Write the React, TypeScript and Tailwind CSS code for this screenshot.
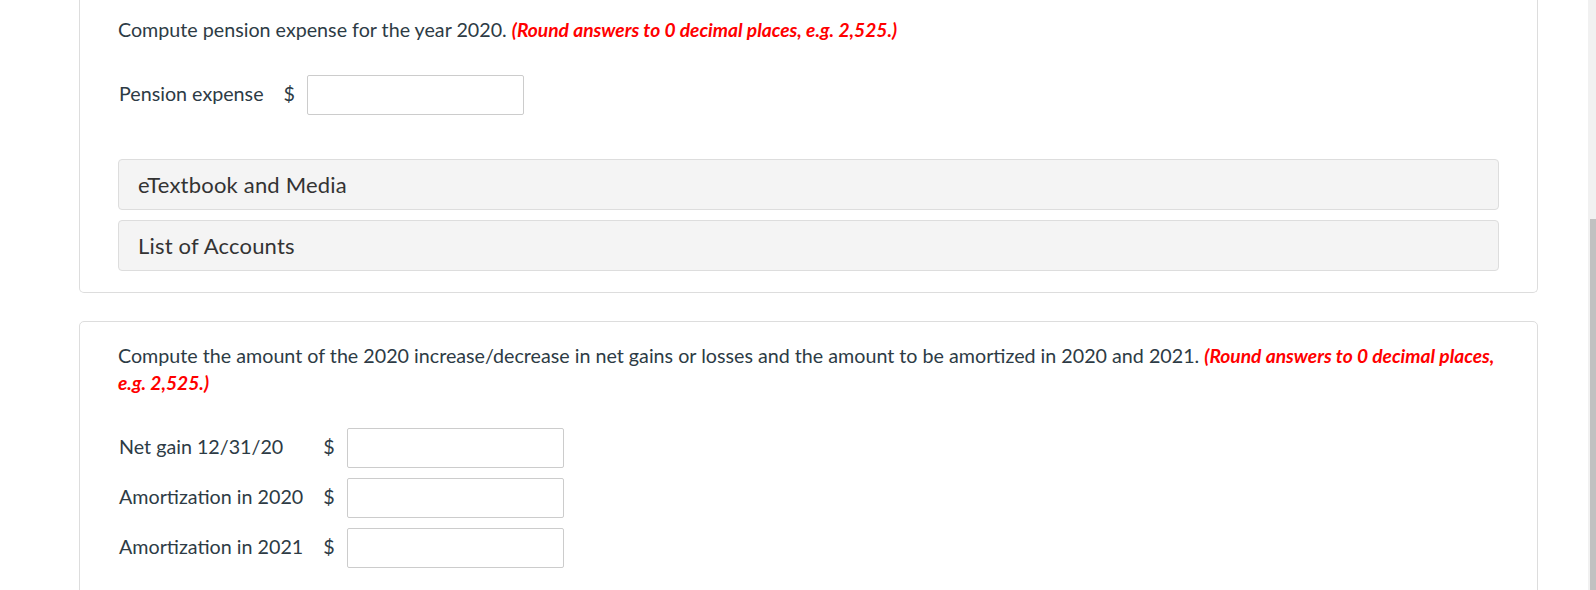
import React from 'react';

const Note = ({ children }: { children: React.ReactNode }) => (
  <span className="font-bold italic text-[19.2px] text-[#ff0000]">{children}</span>
);

const AmountRow = ({ label }: { label: string }) => (
  <>
    <span className="pr-[20px] pb-[4px] whitespace-nowrap">{label}</span>
    <span className="pr-[12px] pb-[4px]">$</span>
    <input
      type="text"
      aria-label={label}
      className="w-[217px] h-[40px] border border-[#cccccc] rounded-[2px] bg-white outline-none"
    />
  </>
);

const Panel = ({ title }: { title: string }) => (
  <div className="h-[51px] flex items-center pl-[19px] bg-[#f4f4f4] border border-[#dddddd] rounded-[4px] text-[22px] tracking-[0.2px] text-[#333333]">
    {title}
  </div>
);

export default function App() {
  return (
    <div className="w-[1596px] h-[590px] overflow-hidden flex bg-white font-['Lato',sans-serif] text-[19.7px] leading-[27px] text-[#2d3b45]">
      <div className="flex-1 pl-[79px] pr-[50px]">
        <div className="border border-t-0 border-[#dddddd] rounded-b-[5px] px-[38px] pt-[16px] pb-[21px]">
          <p>
            Compute pension expense for the year 2020. <Note>(Round answers to 0 decimal places, e.g. 2,525.)</Note>
          </p>
          <div className="mt-[32px] grid grid-cols-[auto_auto_auto] justify-start items-center pl-[1px]">
            <AmountRow label="Pension expense" />
          </div>
          <div className="mt-[44px] flex flex-col gap-[10px]">
            <Panel title="eTextbook and Media" />
            <Panel title="List of Accounts" />
          </div>
        </div>

        <div className="mt-[28px] border border-[#dddddd] rounded-[5px] px-[38px] pt-[20px] pb-[40px]">
          <p>
            Compute the amount of the 2020 increase/decrease in net gains or losses and the amount to be amortized in 2020 and 2021.{' '}
            <Note>(Round answers to 0 decimal places, e.g. 2,525.)</Note>
          </p>
          <div className="mt-[32px] grid grid-cols-[auto_auto_auto] justify-start items-center gap-y-[10px] pl-[1px]">
            <AmountRow label="Net gain 12/31/20" />
            <AmountRow label="Amortization in 2020" />
            <AmountRow label="Amortization in 2021" />
          </div>
        </div>
      </div>

      <div className="w-[8px] bg-[#f1f1f1] flex flex-col items-end">
        <div className="h-[219px] shrink-0" />
        <div className="w-[6px] flex-1 bg-[#c1c1c1]" />
      </div>
    </div>
  );
}
